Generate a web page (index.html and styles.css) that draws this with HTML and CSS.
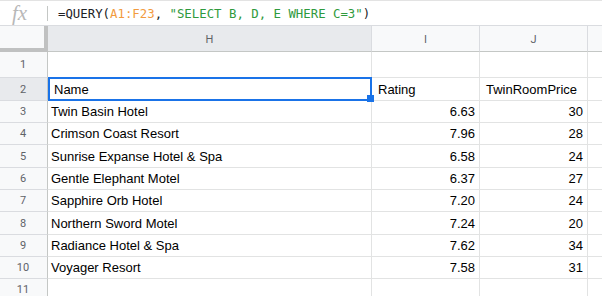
FILE: index.html
```html
<!DOCTYPE html>
<html>
<head>
<meta charset="utf-8">
<link rel="stylesheet" href="styles.css">
</head>
<body>
<div class="page">
  <div class="fbar">
    <div class="fx">fx</div>
    <div class="sep"></div>
    <div class="formula"><span class="fn">=QUERY(</span><span class="rng">A1:F23</span><span class="fn">, </span><span class="str">"SELECT B, D, E WHERE C=3"</span><span class="fn">)</span></div>
  </div>
  <div class="grid">
    <div class="corner"></div>
    <div class="ch sel">H</div>
    <div class="ch">I</div>
    <div class="ch">J</div>
    <div class="ch last"></div>

    <div class="rh">1</div><div class="c"></div><div class="c"></div><div class="c"></div><div class="c last"></div>

    <div class="rh sel">2</div>
    <div class="c hd active">Name<div class="selbox"></div><div class="handle"></div></div>
    <div class="c hd">Rating</div>
    <div class="c hd">TwinRoomPrice</div>
    <div class="c last"></div>

    <div class="rh">3</div><div class="c">Twin Basin Hotel</div><div class="c n">6.63</div><div class="c n">30</div><div class="c last"></div>
    <div class="rh">4</div><div class="c">Crimson Coast Resort</div><div class="c n">7.96</div><div class="c n">28</div><div class="c last"></div>
    <div class="rh">5</div><div class="c">Sunrise Expanse Hotel &amp; Spa</div><div class="c n">6.58</div><div class="c n">24</div><div class="c last"></div>
    <div class="rh">6</div><div class="c">Gentle Elephant Motel</div><div class="c n">6.37</div><div class="c n">27</div><div class="c last"></div>
    <div class="rh">7</div><div class="c">Sapphire Orb Hotel</div><div class="c n">7.20</div><div class="c n">24</div><div class="c last"></div>
    <div class="rh">8</div><div class="c">Northern Sword Motel</div><div class="c n">7.24</div><div class="c n">20</div><div class="c last"></div>
    <div class="rh">9</div><div class="c">Radiance Hotel &amp; Spa</div><div class="c n">7.62</div><div class="c n">34</div><div class="c last"></div>
    <div class="rh">10</div><div class="c">Voyager Resort</div><div class="c n">7.58</div><div class="c n">31</div><div class="c last"></div>
    <div class="rh">11</div><div class="c"></div><div class="c"></div><div class="c"></div><div class="c last"></div>
  </div>
</div>
</body>
</html>
```
FILE: styles.css
```css
html, body {
  margin: 0;
  padding: 0;
  background: #ffffff;
}
.page {
  width: 602px;
  height: 296px;
  overflow: hidden;
  font-family: "Liberation Sans", Arial, sans-serif;
}
.fbar {
  height: 26px;
  box-sizing: border-box;
  border-top: 1px solid #e3e3e3;
  border-bottom: 1px solid #dadce0;
  display: flex;
  align-items: center;
}
.fx {
  width: 46px;
  padding-left: 12px;
  box-sizing: border-box;
  font-family: "Liberation Serif", serif;
  font-style: italic;
  font-size: 21px;
  color: #b8b8b8;
  line-height: 20px;
}
.sep {
  width: 1px;
  height: 15px;
  background: #c4c7c5;
  margin-left: 1px;
}
.formula {
  margin-left: 10px;
  font-family: "DejaVu Sans Mono", "Liberation Mono", monospace;
  font-size: 12.35px;
  white-space: pre;
  color: #202124;
  padding-top: 1px;
}
.rng { color: #f29b3f; }
.str { color: #2f9a3d; }
.grid {
  display: grid;
  grid-template-columns: 48px 324px 108px 108px 1fr;
  grid-template-rows: 26px 26px 23px 22px 22px 23px 22px 22px 23px 22px 22px 22px;
}
.grid > div {
  box-sizing: border-box;
  border-right: 1px solid #e2e3e3;
  border-bottom: 1px solid #e2e3e3;
  display: flex;
  align-items: center;
  min-width: 0;
}
.grid > .corner {
  background: #f8f9fa;
  border-right: 4px solid #c0c1c1;
  border-bottom: 4px solid #c0c1c1;
}
.grid > .ch {
  background: #f8f9fa;
  border-bottom: 1px solid #c4c7c5;
  border-right: 1px solid #dadce0;
  justify-content: center;
  font-family: Roboto, "Liberation Sans", sans-serif;
  font-size: 11px;
  color: #5f6368;
  padding-top: 1px;
}
.grid > .rh {
  background: #f8f9fa;
  border-right: 1px solid #c4c7c5;
  border-bottom: 1px solid #dadce0;
  justify-content: center;
  font-family: Roboto, "Liberation Sans", sans-serif;
  font-size: 11px;
  color: #5f6368;
  padding-right: 1px;
}
.grid > .sel {
  background: #e8eaed;
}
.grid > .c {
  font-size: 13px;
  color: #000000;
  padding-left: 3px;
  white-space: nowrap;
}
.grid > .n {
  justify-content: flex-end;
  padding-right: 4px;
}
.grid > .hd {
  padding-left: 6px;
}
.grid > .last {
  border-right: none;
}
.grid > .active {
  position: relative;
  overflow: visible;
}
.selbox {
  position: absolute;
  left: 0;
  top: -1px;
  width: 324px;
  height: 24px;
  box-sizing: border-box;
  border: 2px solid #1a73e8;
  pointer-events: none;
}
.handle {
  position: absolute;
  left: 319px;
  top: 17px;
  width: 7px;
  height: 7px;
  background: #1a73e8;
  z-index: 2;
}
```
